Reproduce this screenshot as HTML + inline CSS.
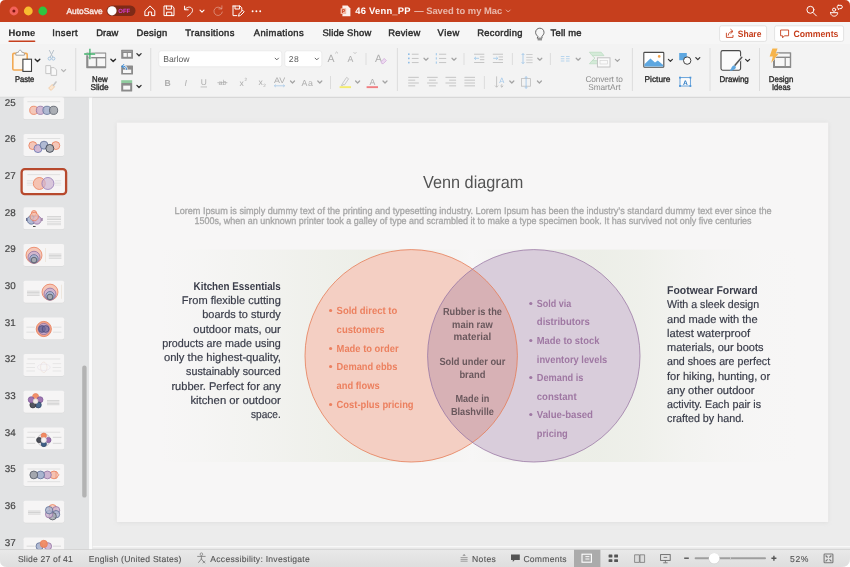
<!DOCTYPE html>
<html lang="en">
<head>
<meta charset="utf-8">
<title>46 Venn_PP — Saved to my Mac</title>
<style>
html,body{margin:0;padding:0;background:#fff;overflow:hidden}
body{width:850px;height:567px;font-family:'Liberation Sans', sans-serif}
svg{display:block;position:absolute;left:0;top:0;will-change:transform}
text{-webkit-font-smoothing:antialiased;text-rendering:geometricPrecision;font-family:'Liberation Sans', sans-serif;white-space:pre}
</style>
</head>
<body>
<svg width="850" height="567" viewBox="0 0 850 567">
<defs>
<clipPath id="win"><path d="M0 5.5Q0 0 5.5 0H844.5Q850 0 850 5.5V558Q850 567 841 567H7Q0 567 0 560Z"/></clipPath>
<clipPath id="cl"><circle cx="411.2" cy="355.8" r="106.2"/></clipPath>
<linearGradient id="band" x1="0" x2="1" y1="0" y2="0">
<stop offset="0.0000" stop-color="#eceee7" stop-opacity="0"/>
<stop offset="0.0625" stop-color="#eceee7" stop-opacity="0.12"/>
<stop offset="0.1562" stop-color="#eceee7" stop-opacity="0.4"/>
<stop offset="0.2188" stop-color="#eceee7" stop-opacity="0.62"/>
<stop offset="0.3125" stop-color="#eceee7" stop-opacity="0.9"/>
<stop offset="0.3750" stop-color="#eceee7" stop-opacity="1.0"/>
<stop offset="0.4375" stop-color="#eceee7" stop-opacity="0.3"/>
<stop offset="0.4875" stop-color="#eceee7" stop-opacity="0.0"/>
<stop offset="0.5391" stop-color="#eceee7" stop-opacity="0.3"/>
<stop offset="0.6016" stop-color="#eceee7" stop-opacity="1.0"/>
<stop offset="0.6875" stop-color="#eceee7" stop-opacity="0.95"/>
<stop offset="0.7500" stop-color="#eceee7" stop-opacity="0.75"/>
<stop offset="0.8125" stop-color="#eceee7" stop-opacity="0.42"/>
<stop offset="0.8750" stop-color="#eceee7" stop-opacity="0.18"/>
<stop offset="0.9375" stop-color="#eceee7" stop-opacity="0.05"/>
<stop offset="1.0000" stop-color="#eceee7" stop-opacity="0"/>
</linearGradient>
<linearGradient id="stat" x1="0" x2="0" y1="0" y2="1">
<stop offset="0" stop-color="#e9e9e9"/><stop offset="1" stop-color="#dedede"/>
</linearGradient>
<filter id="sh" x="-5%" y="-5%" width="110%" height="110%"><feGaussianBlur stdDeviation="2"/></filter>
<filter id="sh1" x="-20%" y="-20%" width="140%" height="140%"><feGaussianBlur stdDeviation="0.7"/></filter>
</defs>
<g clip-path="url(#win)">
<rect x="0" y="0" width="850" height="567" fill="#ececec"/>
<g id="titlebar">
<rect x="0" y="0" width="850" height="22" fill="#c63f1d"/>
<circle cx="13.9" cy="11" r="4.4" fill="#f2625a"/><circle cx="13.9" cy="11" r="1.5" fill="#7a1410"/>
<circle cx="28.3" cy="11" r="4.4" fill="#f8bd30"/>
<circle cx="42.8" cy="11" r="4.4" fill="#2fc540"/>
<text x="66.40" y="13.60" style="stroke:#fff;stroke-width:0.4px;letter-spacing:0.010px" font-size="8.4" fill="#fff" opacity="0.88">AutoSave</text>
<rect x="106.5" y="5.6" width="29" height="10.4" rx="5.2" fill="#7d2a17"/>
<circle cx="112" cy="10.8" r="4.6" fill="#fdfdfd"/>
<text transform="translate(118.30 13.20) scale(0.9616 1)" font-size="6.2" fill="#d63fd2" font-weight="700">OFF</text>
<path d="M145.2 10.6L150 5.9L154.8 10.6V15.6H151.6V12H148.4V15.6H145.2Z" fill="none" stroke="#fff" stroke-width="1.0" stroke-linejoin="round" stroke-linecap="round"/>
<path d="M164.4 6H172.2L174 7.8V15.6H164.4Z M166.4 6V9.2H171.4V6 M166.6 15.6V12.2H171.8V15.6" fill="none" stroke="#fff" stroke-width="1.0" stroke-linejoin="round" stroke-linecap="round"/>
<path d="M184.6 6.2V9.8H188.2 M184.8 9.6C186.6 6.8 190.4 6.2 192 8.6C193.6 11 191.6 13.6 187.6 16.2" fill="none" stroke="#fff" stroke-width="1.0" stroke-linejoin="round" stroke-linecap="round"/>
<path d="M200.00 10.20L202.00 12.20L204.00 10.20" fill="none" stroke="#fff" stroke-width="1.1" stroke-linecap="round" stroke-linejoin="round"/>
<path d="M221.4 8.6A4.2 4.2 0 1 0 222.3 12 M221.9 5.8V8.9H218.8" fill="none" stroke="#fff" stroke-width="1.0" stroke-linejoin="round" stroke-linecap="round" opacity="0.36"/>
<path d="M233 6H240L241.8 7.8V10.4 M233 6V15.6H236.8 M235 6V9H239.6V6" fill="none" stroke="#fff" stroke-width="1.0" stroke-linejoin="round" stroke-linecap="round"/>
<path d="M238.6 15.8L239.2 13.6L242.6 10.2L244.2 11.8L240.8 15.2Z" fill="none" stroke="#fff" stroke-width="1.0" stroke-linejoin="round" stroke-linecap="round" stroke-width="0.9"/>
<circle cx="252.6" cy="11.2" r="0.95" fill="#fff"/>
<circle cx="256.4" cy="11.2" r="0.95" fill="#fff"/>
<circle cx="260.2" cy="11.2" r="0.95" fill="#fff"/>
<path d="M342.4 5.6H347.6L350.4 8.4V16.2H342.4Z" fill="#fff" opacity="0.92"/>
<rect x="340.6" y="8.2" width="5.6" height="5.8" rx="0.6" fill="#f3b9a6"/>
<text x="341.70" y="13.10" font-size="5.4" fill="#c63f1d" font-weight="700">P</text>
<text x="355.20" y="14.30" style="letter-spacing:0.249px" font-size="9.4" fill="#fff" font-weight="700">46 Venn_PP</text>
<text x="414.20" y="14.30" style="letter-spacing:-0.004px" font-size="9.4" fill="#fff" font-weight="700" opacity="0.62">— Saved to my Mac</text>
<path d="M506.20 10.00L508.20 12.00L510.20 10.00" fill="none" stroke="#fff" stroke-width="0.9" stroke-linecap="round" stroke-linejoin="round" opacity="0.6"/>
<circle cx="810.4" cy="9.8" r="3.5" fill="none" stroke="#fff" stroke-width="1.0" stroke-linejoin="round" stroke-linecap="round" stroke-width="0.95"/><path d="M813 12.5L816.4 15.9" fill="none" stroke="#fff" stroke-width="1.0" stroke-linejoin="round" stroke-linecap="round" stroke-width="0.95"/>
<circle cx="834.1" cy="9.7" r="1.6" fill="none" stroke="#fff" stroke-width="1.0" stroke-linejoin="round" stroke-linecap="round" stroke-width="0.9"/><path d="M830.5 12.7H837.7C837.7 17.4 830.5 17.4 830.5 12.7Z" fill="none" stroke="#fff" stroke-width="1.0" stroke-linejoin="round" stroke-linecap="round" stroke-width="0.9"/>
<path d="M838.2 5.3H841.2C842.6 5.3 842.6 8.6 841.2 8.6H839.6L838.4 9.8V8.6C836.8 8.6 836.8 5.3 838.2 5.3Z" fill="none" stroke="#fff" stroke-width="1.0" stroke-linejoin="round" stroke-linecap="round" stroke-width="0.9"/>
</g>
<g id="tabs">
<rect x="0" y="22" width="850" height="22" fill="#f6f6f6"/>
<text x="8.60" y="36.00" style="stroke:#2b2b2b;stroke-width:0.15px;letter-spacing:0.184px" font-size="9.4" fill="#2b2b2b" font-weight="700">Home</text>
<text x="52.30" y="36.00" style="stroke:#2b2b2b;stroke-width:0.42px;letter-spacing:0.369px" font-size="9.4" fill="#2b2b2b">Insert</text>
<text x="96.30" y="36.00" style="stroke:#2b2b2b;stroke-width:0.42px;letter-spacing:0.003px" font-size="9.4" fill="#2b2b2b">Draw</text>
<text x="136.40" y="36.00" style="stroke:#2b2b2b;stroke-width:0.42px;letter-spacing:0.322px" font-size="9.4" fill="#2b2b2b">Design</text>
<text x="185.20" y="36.00" style="stroke:#2b2b2b;stroke-width:0.42px;letter-spacing:0.368px" font-size="9.4" fill="#2b2b2b">Transitions</text>
<text x="253.80" y="36.00" style="stroke:#2b2b2b;stroke-width:0.42px;letter-spacing:0.379px" font-size="9.4" fill="#2b2b2b">Animations</text>
<text x="322.40" y="36.00" style="stroke:#2b2b2b;stroke-width:0.42px;letter-spacing:0.210px" font-size="9.4" fill="#2b2b2b">Slide Show</text>
<text x="388.20" y="36.00" style="stroke:#2b2b2b;stroke-width:0.42px;letter-spacing:0.250px" font-size="9.4" fill="#2b2b2b">Review</text>
<text x="437.60" y="36.00" style="stroke:#2b2b2b;stroke-width:0.42px;letter-spacing:0.481px" font-size="9.4" fill="#2b2b2b">View</text>
<text x="477.30" y="36.00" style="stroke:#2b2b2b;stroke-width:0.42px;letter-spacing:0.296px" font-size="9.4" fill="#2b2b2b">Recording</text>
<text x="550.60" y="36.00" style="stroke:#2b2b2b;stroke-width:0.42px;letter-spacing:0.216px" font-size="9.4" fill="#2b2b2b">Tell me</text>
<rect x="8.4" y="40.4" width="27" height="1.6" rx="0.8" fill="#c63f1d"/>
<path d="M537.6 36.2C536 34.6 535.6 33.6 535.6 32.4C535.6 29.9 537.4 28.2 539.8 28.2C542.2 28.2 544 29.9 544 32.4C544 33.6 543.6 34.6 542 36.2V38.2H537.6Z M538 39.8H541.6" fill="none" stroke="#555" stroke-width="0.9" stroke-linejoin="round" stroke-linecap="round"/>
<rect x="719.6" y="25.8" width="47" height="15.6" rx="2" fill="#fff" stroke="#dcdcdc" stroke-width="0.8"/>
<path d="M726.4 33.2V37.4H733V35.4 M728.2 35.2C728.6 32.8 730.2 31.4 732.4 31.4 M730.8 29.4L733 31.4L730.8 33.4" fill="none" stroke="#c63f1d" stroke-width="0.9" stroke-linejoin="round" stroke-linecap="round"/>
<text transform="translate(737.80 37.00) scale(0.9238 1)" font-size="9.2" fill="#c63f1d" font-weight="700">Share</text>
<rect x="774.6" y="25.8" width="69" height="15.6" rx="2" fill="#fff" stroke="#dcdcdc" stroke-width="0.8"/>
<path d="M780.6 30H788.6V35.8H784.4L782.6 37.8V35.8H780.6Z" fill="none" stroke="#c63f1d" stroke-width="0.9" stroke-linejoin="round"/>
<text transform="translate(793.40 37.00) scale(0.9477 1)" font-size="9.2" fill="#c63f1d" font-weight="700">Comments</text>
</g>
<g id="ribbon">
<rect x="0" y="44" width="850" height="53" fill="#f3f3f3"/>
<rect x="0" y="96.8" width="850" height="0.9" fill="#cfcfcf"/>
<rect x="12.8" y="53.4" width="14.4" height="16.6" rx="1.2" fill="#fcf6ee" stroke="#f2a953" stroke-width="1.6"/>
<path d="M15.8 55.2V53.6C15.8 52.4 17.6 52.6 18.4 52.2C18.6 49.6 21.6 49.6 21.8 52.2C22.6 52.6 24.4 52.4 24.4 53.6V55.2Z" fill="#fdfdfd" stroke="#9a9a9a" stroke-width="0.9" stroke-linejoin="round"/>
<rect x="22.9" y="59.2" width="8.6" height="12.2" fill="#fff" stroke="#3e3e3e" stroke-width="1.1"/>
<path d="M35.20 59.25L37.50 61.55L39.80 59.25" fill="none" stroke="#2e2e2e" stroke-width="1.4" stroke-linecap="round" stroke-linejoin="round"/>
<text transform="translate(14.90 82.00) scale(0.9143 1)" style="stroke:#2e2e2e;stroke-width:0.36px" font-size="8.3" fill="#2e2e2e">Paste</text>
<path d="M49.4 50.4L52.8 57.2 M53.6 50.4L50.2 57.2" fill="none" stroke="#b9c3cc" stroke-width="1" stroke-linecap="round"/>
<circle cx="49.6" cy="58.6" r="1.5" fill="none" stroke="#9fc0dd" stroke-width="0.9"/><circle cx="53.4" cy="58.6" r="1.5" fill="none" stroke="#9fc0dd" stroke-width="0.9"/>
<path d="M45.8 65.6H50.6V73.6H45.8Z M51 67.6H54.2L56.6 70V75.4H51Z" fill="#f8f8f8" stroke="#c2c2c2" stroke-width="0.9" stroke-linejoin="round"/>
<path d="M61.60 69.60L63.60 71.60L65.60 69.60" fill="none" stroke="#b4b4b4" stroke-width="1.25" stroke-linecap="round" stroke-linejoin="round"/>
<path d="M48.6 88.2L52.2 84.4L54.6 86.8L51.2 90.4Z" fill="#fbe6cf" stroke="#f1c8a0" stroke-width="0.8" stroke-linejoin="round"/><path d="M53.4 85.4L56 82" stroke="#c6c6c6" stroke-width="1.6" stroke-linecap="round"/>
<rect x="75.40" y="48" width="0.8" height="43" fill="#d6d6d6"/>
<rect x="86.2" y="52.4" width="20" height="15.8" rx="0.6" fill="#8b8b8b"/>
<rect x="88.4" y="53.6" width="16.8" height="3.4" fill="#f7f7f7"/><rect x="88.4" y="58.4" width="7.4" height="7.8" fill="#f7f7f7"/><rect x="97.2" y="58.4" width="8" height="7.8" fill="#f7f7f7"/>
<path d="M89.9 48.8V59.2 M84.2 54H95.2" stroke="#f3f3f3" stroke-width="2.6" fill="none" opacity="0.9"/>
<path d="M89.9 48.8V59.2 M84.2 54H95.2" stroke="#3fae6a" stroke-width="1.3" fill="none"/>
<path d="M110.90 59.25L113.20 61.55L115.50 59.25" fill="none" stroke="#2e2e2e" stroke-width="1.4" stroke-linecap="round" stroke-linejoin="round"/>
<text transform="translate(92.00 82.00) scale(0.9392 1)" style="stroke:#2e2e2e;stroke-width:0.36px" font-size="8.3" fill="#2e2e2e">New</text>
<text x="90.60" y="90.40" style="stroke:#2e2e2e;stroke-width:0.36px;letter-spacing:-0.113px" font-size="8.3" fill="#2e2e2e">Slide</text>
<rect x="121.2" y="49.8" width="11.8" height="9" rx="0.5" fill="#8b8b8b"/><rect x="123.4" y="53" width="3.4" height="3.8" fill="#f7f7f7"/><rect x="127.8" y="53" width="3.4" height="3.8" fill="#f7f7f7"/><rect x="122.6" y="50.8" width="9" height="1" fill="#a9a9a9"/>
<path d="M136.90 53.65L139.00 55.75L141.10 53.65" fill="none" stroke="#333" stroke-width="1.3" stroke-linecap="round" stroke-linejoin="round"/>
<rect x="121.2" y="65.6" width="11.8" height="9" rx="0.5" fill="#8b8b8b"/><rect x="123" y="69.6" width="8.2" height="3.4" fill="#f7f7f7"/>
<path d="M126.6 69.4C126.6 66.8 124.6 65.8 122.4 66.4" stroke="#f3f3f3" stroke-width="2.4" fill="none"/><path d="M126.6 69.4C126.6 66.8 124.6 65.8 122.2 66.4 M123.8 64.4L121.8 66.5L124 68.2" stroke="#3a8ad6" stroke-width="1" fill="none" stroke-linecap="round" stroke-linejoin="round"/>
<rect x="121.2" y="80.2" width="11" height="2.8" fill="#8fcb9e"/><rect x="121.2" y="83" width="11" height="8.6" rx="0.5" fill="#8b8b8b"/><rect x="123.2" y="85.6" width="7" height="4" fill="#f7f7f7"/>
<path d="M136.90 85.35L139.00 87.45L141.10 85.35" fill="none" stroke="#333" stroke-width="1.3" stroke-linecap="round" stroke-linejoin="round"/>
<rect x="150.40" y="48" width="0.8" height="43" fill="#d6d6d6"/>
<rect x="158.8" y="50.8" width="123" height="16" rx="2.4" fill="#fff" stroke="#e2e2e2" stroke-width="0.6"/>
<text x="163.20" y="62.00" style="letter-spacing:-0.016px" font-size="8.6" fill="#5e5e5e">Barlow</text>
<path d="M275.10 58.15L276.80 59.85L278.50 58.15" fill="none" stroke="#666" stroke-width="1.0" stroke-linecap="round" stroke-linejoin="round"/>
<rect x="284.8" y="50.8" width="37" height="16" rx="2.4" fill="#fff" stroke="#e2e2e2" stroke-width="0.6"/>
<text x="288.80" y="62.00" style="letter-spacing:0.438px" font-size="8.6" fill="#5e5e5e">28</text>
<path d="M315.10 58.15L316.80 59.85L318.50 58.15" fill="none" stroke="#666" stroke-width="1.0" stroke-linecap="round" stroke-linejoin="round"/>
<text x="327.60" y="62.20" font-size="10.5" fill="#adadad">A</text>
<path d="M335.2 53.4L336.6 52L338 53.4" fill="none" stroke="#adadad" stroke-width="0.7"/>
<text x="347.40" y="62.20" font-size="8.8" fill="#adadad">A</text>
<path d="M353.6 52.2L355 53.6L356.4 52.2" fill="none" stroke="#adadad" stroke-width="0.7"/>
<rect x="365.60" y="53" width="0.8" height="12" fill="#d6d6d6"/>
<text x="375.00" y="62.20" font-size="10.5" fill="#adadad">A</text>
<path d="M381 61.8L384.2 58.4L386.4 60.6L383.4 63.6H381.8Z" fill="#ecd8f0" stroke="#cfa6d8" stroke-width="0.7" stroke-linejoin="round"/>
<rect x="396.90" y="48" width="0.8" height="43" fill="#d6d6d6"/>
<text x="164.60" y="85.60" font-size="8.6" fill="#adadad" font-weight="700">B</text>
<text x="184.40" y="85.60" style="font-style:italic" font-size="8.6" fill="#adadad">I</text>
<text x="200.80" y="85.20" font-size="8.4" fill="#adadad">U</text>
<rect x="200.6" y="86.6" width="6.4" height="0.7" fill="#adadad"/>
<text x="218.60" y="85.20" font-size="7.2" fill="#adadad">ab</text>
<rect x="217.4" y="82.4" width="10" height="0.7" fill="#adadad"/>
<text x="239.60" y="85.60" font-size="8.6" fill="#adadad">x</text>
<text x="244.40" y="81.40" font-size="4.6" fill="#adadad">2</text>
<text x="258.40" y="85.00" font-size="8.6" fill="#adadad">x</text>
<text x="263.20" y="87.40" font-size="4.6" fill="#adadad">2</text>
<text transform="translate(274.00 83.20) scale(1.1113 1)" font-size="8.0" fill="#adadad">AV</text>
<path d="M274.4 85.8H284.6 M275.8 84.6L274.4 85.8L275.8 87 M283.2 84.6L284.6 85.8L283.2 87" fill="none" stroke="#9cc3e6" stroke-width="0.7"/>
<path d="M290.50 81.00L292.50 83.00L294.50 81.00" fill="none" stroke="#a4a4a4" stroke-width="1.25" stroke-linecap="round" stroke-linejoin="round"/>
<text x="301.60" y="85.60" style="letter-spacing:0.634px" font-size="8.8" fill="#adadad">Aa</text>
<path d="M317.80 81.00L319.80 83.00L321.80 81.00" fill="none" stroke="#a4a4a4" stroke-width="1.25" stroke-linecap="round" stroke-linejoin="round"/>
<rect x="330.10" y="76" width="0.8" height="13" fill="#d6d6d6"/>
<path d="M342.4 83.6L346.6 77.4L348.6 78.8L344.4 85Z M342.2 84L341.4 85.6L343.4 85.2" fill="none" stroke="#bdbdbd" stroke-width="0.8" stroke-linejoin="round"/>
<rect x="339.6" y="86.2" width="11.4" height="1.9" fill="#f4ec6e"/>
<path d="M355.60 81.00L357.60 83.00L359.60 81.00" fill="none" stroke="#a4a4a4" stroke-width="1.25" stroke-linecap="round" stroke-linejoin="round"/>
<text x="369.40" y="85.00" font-size="8.8" fill="#adadad">A</text>
<rect x="366.6" y="86.2" width="11.4" height="1.9" fill="#f07e82"/>
<path d="M383.00 81.00L385.00 83.00L387.00 81.00" fill="none" stroke="#a4a4a4" stroke-width="1.25" stroke-linecap="round" stroke-linejoin="round"/>
<rect x="408.0" y="53.40" width="1.6" height="1.6" fill="#8fbde6"/><rect x="411.8" y="53.75" width="6.8" height="0.9" fill="#c0c0c0"/>
<rect x="408.0" y="57.60" width="1.6" height="1.6" fill="#8fbde6"/><rect x="411.8" y="57.95" width="6.8" height="0.9" fill="#c0c0c0"/>
<rect x="408.0" y="61.80" width="1.6" height="1.6" fill="#8fbde6"/><rect x="411.8" y="62.15" width="6.8" height="0.9" fill="#c0c0c0"/>
<path d="M424.00 58.20L426.00 60.20L428.00 58.20" fill="none" stroke="#a4a4a4" stroke-width="1.25" stroke-linecap="round" stroke-linejoin="round"/>
<rect x="435.8" y="53.10" width="1.0" height="2.2" fill="#9cc6ea"/><rect x="439.0" y="53.75" width="7.2" height="0.9" fill="#c0c0c0"/>
<rect x="435.8" y="57.30" width="1.0" height="2.2" fill="#9cc6ea"/><rect x="439.0" y="57.95" width="7.2" height="0.9" fill="#c0c0c0"/>
<rect x="435.8" y="61.50" width="1.0" height="2.2" fill="#9cc6ea"/><rect x="439.0" y="62.15" width="7.2" height="0.9" fill="#c0c0c0"/>
<path d="M452.00 58.20L454.00 60.20L456.00 58.20" fill="none" stroke="#a4a4a4" stroke-width="1.25" stroke-linecap="round" stroke-linejoin="round"/>
<rect x="463.60" y="53" width="0.8" height="12" fill="#d6d6d6"/>
<rect x="474.10" y="53.75" width="10.2" height="0.9" fill="#c0c0c0"/>
<rect x="479.90" y="56.50" width="4.4" height="0.9" fill="#c0c0c0"/>
<rect x="479.90" y="59.25" width="4.4" height="0.9" fill="#c0c0c0"/>
<rect x="474.10" y="62.00" width="10.2" height="0.9" fill="#c0c0c0"/>
<path d="M479 58.3H474.4 M476 56.8L474.4 58.3L476 59.8" fill="none" stroke="#9cc6ea" stroke-width="0.8"/>
<rect x="492.80" y="53.75" width="10.2" height="0.9" fill="#c0c0c0"/>
<rect x="498.60" y="56.50" width="4.4" height="0.9" fill="#c0c0c0"/>
<rect x="498.60" y="59.25" width="4.4" height="0.9" fill="#c0c0c0"/>
<rect x="492.80" y="62.00" width="10.2" height="0.9" fill="#c0c0c0"/>
<path d="M493.2 58.3H497.8 M496.2 56.8L497.8 58.3L496.2 59.8" fill="none" stroke="#9cc6ea" stroke-width="0.8"/>
<rect x="511.90" y="53" width="0.8" height="12" fill="#d6d6d6"/>
<path d="M523 53.6V63.6 M521.6 55L523 53.6L524.4 55 M521.6 62.2L523 63.6L524.4 62.2" fill="none" stroke="#8fbde6" stroke-width="0.7"/>
<rect x="526.20" y="54.20" width="6.4" height="0.8" fill="#c4c4c4"/>
<rect x="526.20" y="56.90" width="6.4" height="0.8" fill="#c4c4c4"/>
<rect x="526.20" y="59.60" width="6.4" height="0.8" fill="#c4c4c4"/>
<rect x="526.20" y="62.30" width="6.4" height="0.8" fill="#c4c4c4"/>
<path d="M537.80 58.20L539.80 60.20L541.80 58.20" fill="none" stroke="#a4a4a4" stroke-width="1.25" stroke-linecap="round" stroke-linejoin="round"/>
<rect x="549.90" y="53" width="0.8" height="12" fill="#d6d6d6"/>
<rect x="560.8" y="56.20" width="3.6" height="0.8" fill="#a9cdec"/><rect x="566" y="56.20" width="3.6" height="0.8" fill="#a9cdec"/>
<rect x="560.8" y="58.40" width="3.6" height="0.8" fill="#a9cdec"/><rect x="566" y="58.40" width="3.6" height="0.8" fill="#a9cdec"/>
<rect x="560.8" y="60.60" width="3.6" height="0.8" fill="#a9cdec"/><rect x="566" y="60.60" width="3.6" height="0.8" fill="#a9cdec"/>
<path d="M576.20 58.20L578.20 60.20L580.20 58.20" fill="none" stroke="#a4a4a4" stroke-width="1.25" stroke-linecap="round" stroke-linejoin="round"/>
<path d="M589.4 52.2H601.2L604 55.6H592.2Z M589.4 63.8H599.6L602.4 60.6H592.2Z" fill="#d4ead8" stroke="#b4d9bb" stroke-width="0.6"/><path d="M592.2 55.6L595 58.2L592.2 60.6" fill="none" stroke="#b4d9bb" stroke-width="0.8"/>
<rect x="597.4" y="57.8" width="12.6" height="9.2" fill="#fafafa" stroke="#bdbdbd" stroke-width="0.9"/><rect x="600" y="60.6" width="7.4" height="3.4" fill="none" stroke="#cfcfcf" stroke-width="0.6"/>
<path d="M615.40 59.40L617.40 61.40L619.40 59.40" fill="none" stroke="#a4a4a4" stroke-width="1.25" stroke-linecap="round" stroke-linejoin="round"/>
<text x="585.40" y="82.00" style="letter-spacing:-0.098px" font-size="8.3" fill="#8c8c8c">Convert to</text>
<text x="588.20" y="90.40" style="letter-spacing:-0.048px" font-size="8.3" fill="#8c8c8c">SmartArt</text>
<rect x="408.20" y="76.85" width="10.6" height="0.9" fill="#c0c0c0"/>
<rect x="408.20" y="79.70" width="7" height="0.9" fill="#c0c0c0"/>
<rect x="408.20" y="82.55" width="10.6" height="0.9" fill="#c0c0c0"/>
<rect x="408.20" y="85.40" width="7" height="0.9" fill="#c0c0c0"/>
<rect x="427.10" y="76.85" width="10.6" height="0.9" fill="#c0c0c0"/>
<rect x="428.90" y="79.70" width="7" height="0.9" fill="#c0c0c0"/>
<rect x="427.10" y="82.55" width="10.6" height="0.9" fill="#c0c0c0"/>
<rect x="428.90" y="85.40" width="7" height="0.9" fill="#c0c0c0"/>
<rect x="445.50" y="76.85" width="10.6" height="0.9" fill="#c0c0c0"/>
<rect x="449.10" y="79.70" width="7" height="0.9" fill="#c0c0c0"/>
<rect x="445.50" y="82.55" width="10.6" height="0.9" fill="#c0c0c0"/>
<rect x="449.10" y="85.40" width="7" height="0.9" fill="#c0c0c0"/>
<rect x="464.40" y="76.85" width="10.6" height="0.9" fill="#c0c0c0"/>
<rect x="464.40" y="79.70" width="10.6" height="0.9" fill="#c0c0c0"/>
<rect x="464.40" y="82.55" width="10.6" height="0.9" fill="#c0c0c0"/>
<rect x="464.40" y="85.40" width="10.6" height="0.9" fill="#c0c0c0"/>
<rect x="483.90" y="76" width="0.8" height="13" fill="#d6d6d6"/>
<path d="M496.6 76.4V87.2 M495 85.6L496.6 87.2L498.2 85.6" fill="none" stroke="#b8b8b8" stroke-width="0.8"/>
<text x="499.30" y="83.20" font-size="7.6" fill="#a4c8ea">A</text>
<path d="M501.8 84.2V87.2 M500.4 85.8L501.8 87.2L503.2 85.8" stroke="#b8b8b8" stroke-width="0.8" fill="none"/>
<path d="M509.80 81.00L511.80 83.00L513.80 81.00" fill="none" stroke="#a4a4a4" stroke-width="1.25" stroke-linecap="round" stroke-linejoin="round"/>
<rect x="521.6" y="78.6" width="9" height="7.6" fill="none" stroke="#bdbdbd" stroke-width="0.8"/><path d="M526.1 76.6V88.4 M524.9 77.8L526.1 76.6L527.3 77.8 M524.9 87.2L526.1 88.4L527.3 87.2" fill="none" stroke="#8fbde6" stroke-width="0.7"/>
<path d="M537.40 81.00L539.40 83.00L541.40 81.00" fill="none" stroke="#a4a4a4" stroke-width="1.25" stroke-linecap="round" stroke-linejoin="round"/>
<rect x="631.90" y="48" width="0.8" height="43" fill="#d6d6d6"/>
<rect x="643.8" y="52.4" width="20" height="14.8" rx="0.8" fill="#fff" stroke="#4a4a4a" stroke-width="1.1"/>
<path d="M644.4 64.2L650.4 58.4L655 62.6L657.8 60.4L663.2 65V66.6H644.4Z" fill="#5ea7e0"/><circle cx="659.2" cy="56.4" r="1.3" fill="#f2a24a"/>
<path d="M668.40 59.40L670.40 61.40L672.40 59.40" fill="none" stroke="#333" stroke-width="1.2" stroke-linecap="round" stroke-linejoin="round"/>
<text x="644.60" y="82.00" style="stroke:#2e2e2e;stroke-width:0.36px;letter-spacing:-0.005px" font-size="8.3" fill="#2e2e2e">Picture</text>
<rect x="679.2" y="53" width="7.6" height="7.2" fill="#5ea7e0"/><circle cx="687.2" cy="60.6" r="3.7" fill="#fbfbfb" stroke="#444" stroke-width="1"/>
<path d="M695.80 57.60L697.80 59.60L699.80 57.60" fill="none" stroke="#333" stroke-width="1.2" stroke-linecap="round" stroke-linejoin="round"/>
<rect x="680" y="77.6" width="10.4" height="8.4" fill="#fbfbfb" stroke="#5b9bd8" stroke-width="0.9"/>
<text x="682.90" y="84.60" font-size="6.6" fill="#2f7cc4" font-weight="700">A</text>
<rect x="679.1" y="76.69999999999999" width="1.8" height="1.8" fill="#4b94d8"/>
<rect x="689.5" y="76.69999999999999" width="1.8" height="1.8" fill="#4b94d8"/>
<rect x="679.1" y="85.1" width="1.8" height="1.8" fill="#4b94d8"/>
<rect x="689.5" y="85.1" width="1.8" height="1.8" fill="#4b94d8"/>
<rect x="709.60" y="48" width="0.8" height="43" fill="#d6d6d6"/>
<rect x="721" y="50.6" width="19.6" height="19.6" rx="1.6" fill="#fbfbfb" stroke="#4a4a4a" stroke-width="1.1"/>
<path d="M741.8 57.2L735 65.2" stroke="#f3f3f3" stroke-width="3.2" stroke-linecap="round"/><path d="M741.8 57.2L735 65.2" stroke="#555" stroke-width="1.5" stroke-linecap="round"/><path d="M729.6 70.6C731 70.2 731.2 67 733.4 65.6C734.8 64.8 736.6 66.6 735.6 68.2C734.4 70.2 731.6 71 729.6 70.6Z" fill="#5ea7e0"/>
<path d="M745.60 59.40L747.60 61.40L749.60 59.40" fill="none" stroke="#333" stroke-width="1.2" stroke-linecap="round" stroke-linejoin="round"/>
<text transform="translate(719.60 82.00) scale(0.9593 1)" style="stroke:#2e2e2e;stroke-width:0.36px" font-size="8.3" fill="#2e2e2e">Drawing</text>
<rect x="759.10" y="48" width="0.8" height="43" fill="#d6d6d6"/>
<rect x="773" y="52.2" width="18.2" height="15.8" rx="0.6" fill="#8b8b8b"/>
<rect x="775" y="53.6" width="14.8" height="3" fill="#f7f7f7"/><rect x="775" y="58" width="9.6" height="8" fill="#f7f7f7"/><rect x="785.8" y="58" width="4" height="8" fill="#f7f7f7"/>
<path d="M772.4 48.4H777.6L775.6 53.4H778.8L771.2 63L772.8 56.4H769.6Z" fill="#f6b44c" stroke="#f3f3f3" stroke-width="0.9" paint-order="stroke"/>
<text transform="translate(768.80 82.00) scale(0.9525 1)" style="stroke:#2e2e2e;stroke-width:0.36px" font-size="8.3" fill="#2e2e2e">Design</text>
<text transform="translate(772.00 90.40) scale(0.9065 1)" style="stroke:#2e2e2e;stroke-width:0.36px" font-size="8.3" fill="#2e2e2e">Ideas</text>
</g>
<g id="thumbs">
<rect x="0" y="97.6" width="89.4" height="452.4" fill="#e2e3e4"/>
<rect x="89.1" y="97.6" width="3.1" height="452.4" fill="#fbfbfb"/><rect x="92.2" y="97.6" width="0.6" height="452.4" fill="#e4e4e4"/>
<rect x="82.2" y="365.6" width="4.4" height="132" rx="2.2" fill="#b3b3b3"/>
<rect x="23.40" y="97.82" width="40.8" height="22" rx="2" fill="#c9c9c9" opacity="0.55" filter="url(#sh1)"/>
<rect x="23.40" y="97.32" width="40.8" height="22" rx="1.8" fill="#f6f5f5"/>
<text x="4.70" y="105.62" style="stroke:#454545;stroke-width:0.2px;letter-spacing:0.094px" font-size="9.8" fill="#454545">25</text>
<rect x="27.40" y="101.52" width="32.8" height="0.6" fill="#d2d2d2"/>
<circle cx="33.80" cy="110.32" r="4.1" fill="#f5c2b1" fill-opacity="0.9" stroke="#e97a54" stroke-width="0.75"/>
<circle cx="40.40" cy="110.32" r="4.1" fill="#cdb4d0" fill-opacity="0.9" stroke="#8f6ea0" stroke-width="0.75"/>
<circle cx="47.00" cy="110.32" r="4.1" fill="#a9b4cf" fill-opacity="0.9" stroke="#5a6a92" stroke-width="0.75"/>
<circle cx="53.60" cy="110.32" r="4.1" fill="#a4a7ae" fill-opacity="0.9" stroke="#4e535e" stroke-width="0.75"/>
<rect x="23.40" y="134.50" width="40.8" height="22" rx="2" fill="#c9c9c9" opacity="0.55" filter="url(#sh1)"/>
<rect x="23.40" y="134.00" width="40.8" height="22" rx="1.8" fill="#f6f5f5"/>
<text x="4.70" y="142.30" style="stroke:#454545;stroke-width:0.2px;letter-spacing:0.094px" font-size="9.8" fill="#454545">26</text>
<rect x="27.40" y="138.20" width="32.8" height="0.6" fill="#d2d2d2"/>
<circle cx="32.80" cy="145.60" r="4.0" fill="#f5c2b1" fill-opacity="0.9" stroke="#e97a54" stroke-width="0.75"/>
<circle cx="55.80" cy="145.60" r="4.0" fill="#f5c2b1" fill-opacity="0.9" stroke="#e97a54" stroke-width="0.75"/>
<circle cx="38.00" cy="148.60" r="4.0" fill="#cdb4d0" fill-opacity="0.9" stroke="#5d6fae" stroke-width="0.75"/>
<circle cx="44.00" cy="145.20" r="4.0" fill="#a9b4cf" fill-opacity="0.9" stroke="#5a6a92" stroke-width="0.75"/>
<circle cx="49.80" cy="148.40" r="4.0" fill="#a4a7ae" fill-opacity="0.9" stroke="#2e3440" stroke-width="0.75"/>
<rect x="21.60" y="169.18" width="44.5" height="25.0" rx="3.2" fill="#f6f4f4" stroke="#b7492d" stroke-width="2.3"/>
<text x="4.70" y="178.98" style="stroke:#454545;stroke-width:0.2px;letter-spacing:0.094px" font-size="9.8" fill="#454545">27</text>
<rect x="27.40" y="174.48" width="32.8" height="0.6" fill="#d2d2d2"/>
<circle cx="39.30" cy="183.48" r="6.0" fill="#f5c2b1" fill-opacity="1" stroke="#e97a54" stroke-width="0.75"/>
<circle cx="47.90" cy="183.48" r="6.0" fill="#cdb4d0" fill-opacity="0.7" stroke="#8f74b4" stroke-width="0.75"/>
<rect x="26.80" y="180.28" width="6.2" height="0.6" fill="#dcdcdc"/>
<rect x="55.00" y="180.28" width="6.2" height="0.6" fill="#dcdcdc"/>
<rect x="26.80" y="181.78" width="6.2" height="0.6" fill="#dcdcdc"/>
<rect x="55.00" y="181.78" width="6.2" height="0.6" fill="#dcdcdc"/>
<rect x="26.80" y="183.28" width="6.2" height="0.6" fill="#dcdcdc"/>
<rect x="55.00" y="183.28" width="6.2" height="0.6" fill="#dcdcdc"/>
<rect x="26.80" y="184.78" width="6.2" height="0.6" fill="#dcdcdc"/>
<rect x="55.00" y="184.78" width="6.2" height="0.6" fill="#dcdcdc"/>
<rect x="23.40" y="207.86" width="40.8" height="22" rx="2" fill="#c9c9c9" opacity="0.55" filter="url(#sh1)"/>
<rect x="23.40" y="207.36" width="40.8" height="22" rx="1.8" fill="#f6f5f5"/>
<text x="4.70" y="215.66" style="stroke:#454545;stroke-width:0.2px;letter-spacing:0.094px" font-size="9.8" fill="#454545">28</text>
<circle cx="34.00" cy="213.16" r="2.6" fill="#f5c2b1" fill-opacity="0.9" stroke="#e97a54" stroke-width="0.75"/>
<circle cx="31.40" cy="219.96" r="4.2" fill="#a9b4cf" fill-opacity="0.9" stroke="#5a6a92" stroke-width="0.75"/>
<circle cx="37.00" cy="219.96" r="4.2" fill="#cdb4d0" fill-opacity="0.9" stroke="#8f6ea0" stroke-width="0.75"/>
<circle cx="34.20" cy="216.56" r="4.2" fill="#f5c2b1" fill-opacity="0.6" stroke="#e97a54" stroke-width="0.75"/>
<rect x="26.00" y="217.96" width="1.2" height="3.0" fill="#6a6f8e"/>
<rect x="41.40" y="217.96" width="1.2" height="3.0" fill="#8a6a96"/>
<rect x="33.00" y="225.96" width="2.6" height="1.0" fill="#444"/>
<rect x="47.00" y="216.16" width="14" height="0.8" fill="#cfcfcf"/>
<rect x="47.00" y="217.66" width="14" height="0.8" fill="#cfcfcf"/>
<rect x="47.00" y="219.16" width="14" height="0.8" fill="#cfcfcf"/>
<rect x="47.00" y="221.36" width="14" height="0.8" fill="#d6d6d6"/>
<rect x="47.00" y="222.86" width="14" height="0.8" fill="#d6d6d6"/>
<rect x="47.00" y="224.36" width="14" height="0.8" fill="#d6d6d6"/>
<rect x="23.40" y="244.54" width="40.8" height="22" rx="2" fill="#c9c9c9" opacity="0.55" filter="url(#sh1)"/>
<rect x="23.40" y="244.04" width="40.8" height="22" rx="1.8" fill="#f6f5f5"/>
<text x="4.70" y="252.34" style="stroke:#454545;stroke-width:0.2px;letter-spacing:0.094px" font-size="9.8" fill="#454545">29</text>
<circle cx="34.00" cy="255.24" r="8.0" fill="#f5c2b1" fill-opacity="0.9" stroke="#e97a54" stroke-width="0.75"/>
<circle cx="34.00" cy="257.24" r="6.0" fill="#cdb4d0" fill-opacity="0.9" stroke="#8f6ea0" stroke-width="0.75"/>
<circle cx="34.00" cy="258.84" r="4.2" fill="#a9b4cf" fill-opacity="0.9" stroke="#5a6a92" stroke-width="0.75"/>
<circle cx="34.00" cy="260.04" r="2.8" fill="#a4a7ae" fill-opacity="0.9" stroke="#4e535e" stroke-width="0.75"/>
<rect x="45.00" y="248.04" width="0.5" height="14" fill="#e6d9c6"/>
<rect x="48.80" y="253.64" width="12.6" height="0.8" fill="#cfcfcf"/>
<rect x="48.80" y="255.04" width="12.6" height="0.8" fill="#cfcfcf"/>
<rect x="48.80" y="256.44" width="12.6" height="0.8" fill="#cfcfcf"/>
<rect x="48.80" y="257.84" width="12.6" height="0.8" fill="#cfcfcf"/>
<rect x="23.40" y="281.22" width="40.8" height="22" rx="2" fill="#c9c9c9" opacity="0.55" filter="url(#sh1)"/>
<rect x="23.40" y="280.72" width="40.8" height="22" rx="1.8" fill="#f6f5f5"/>
<text x="4.70" y="289.02" style="stroke:#454545;stroke-width:0.2px;letter-spacing:0.094px" font-size="9.8" fill="#454545">30</text>
<circle cx="50.00" cy="292.12" r="8.0" fill="#f5c2b1" fill-opacity="0.9" stroke="#e97a54" stroke-width="0.75"/>
<circle cx="50.00" cy="294.12" r="6.0" fill="#cdb4d0" fill-opacity="0.9" stroke="#8f6ea0" stroke-width="0.75"/>
<circle cx="50.00" cy="295.72" r="4.2" fill="#a9b4cf" fill-opacity="0.9" stroke="#5a6a92" stroke-width="0.75"/>
<circle cx="50.00" cy="296.92" r="2.8" fill="#a4a7ae" fill-opacity="0.9" stroke="#4e535e" stroke-width="0.75"/>
<rect x="61.00" y="284.72" width="0.5" height="14" fill="#e6d9c6"/>
<rect x="27.00" y="290.72" width="12.6" height="0.8" fill="#cfcfcf"/>
<rect x="27.00" y="292.12" width="12.6" height="0.8" fill="#cfcfcf"/>
<rect x="27.00" y="293.52" width="12.6" height="0.8" fill="#cfcfcf"/>
<rect x="27.00" y="294.92" width="12.6" height="0.8" fill="#cfcfcf"/>
<rect x="23.40" y="317.90" width="40.8" height="22" rx="2" fill="#c9c9c9" opacity="0.55" filter="url(#sh1)"/>
<rect x="23.40" y="317.40" width="40.8" height="22" rx="1.8" fill="#f6f5f5"/>
<text x="4.70" y="325.70" style="stroke:#454545;stroke-width:0.2px;letter-spacing:0.094px" font-size="9.8" fill="#454545">31</text>
<circle cx="43.80" cy="329.00" r="7.6" fill="#f0a58c" fill-opacity="1" stroke="#e97a54" stroke-width="0.8"/>
<circle cx="43.80" cy="329.00" r="5.6" fill="#c9a9c4" fill-opacity="1" stroke="#8f6ea0" stroke-width="0.75"/>
<circle cx="42.00" cy="329.00" r="3.4" fill="#6f6a9a" fill-opacity="0.9" stroke="#4d4a7a" stroke-width="0.75"/>
<circle cx="45.60" cy="329.00" r="3.4" fill="#6f6a9a" fill-opacity="0.7" stroke="#4d4a7a" stroke-width="0.75"/>
<rect x="26.40" y="326.80" width="8.4" height="0.6" fill="#d2d2d2"/>
<rect x="53.00" y="326.80" width="8.4" height="0.6" fill="#d2d2d2"/>
<rect x="26.40" y="331.80" width="8.4" height="0.6" fill="#d2d2d2"/>
<rect x="53.00" y="331.80" width="8.4" height="0.6" fill="#d2d2d2"/>
<rect x="23.40" y="354.58" width="40.8" height="22" rx="2" fill="#c9c9c9" opacity="0.55" filter="url(#sh1)"/>
<rect x="23.40" y="354.08" width="40.8" height="22" rx="1.8" fill="#f6f5f5"/>
<text x="4.70" y="362.38" style="stroke:#454545;stroke-width:0.2px;letter-spacing:0.094px" font-size="9.8" fill="#454545">32</text>
<rect x="27.40" y="358.68" width="32.8" height="0.6" fill="#d2d2d2"/>
<ellipse cx="43.80" cy="367.28" rx="3.2" ry="5.2" fill="none" stroke="#ead9cf" stroke-width="0.5"/>
<ellipse cx="43.80" cy="367.28" rx="6.4" ry="3.2" fill="none" stroke="#e3dde6" stroke-width="0.5"/>
<rect x="26.40" y="363.48" width="8.6" height="0.6" fill="#dcdcdc"/>
<rect x="52.60" y="363.48" width="8.6" height="0.6" fill="#dcdcdc"/>
<rect x="26.40" y="367.08" width="8.6" height="0.6" fill="#dcdcdc"/>
<rect x="52.60" y="367.08" width="8.6" height="0.6" fill="#dcdcdc"/>
<rect x="26.40" y="370.68" width="8.6" height="0.6" fill="#dcdcdc"/>
<rect x="52.60" y="370.68" width="8.6" height="0.6" fill="#dcdcdc"/>
<rect x="23.40" y="391.26" width="40.8" height="22" rx="2" fill="#c9c9c9" opacity="0.55" filter="url(#sh1)"/>
<rect x="23.40" y="390.76" width="40.8" height="22" rx="1.8" fill="#f6f5f5"/>
<text x="4.70" y="399.06" style="stroke:#454545;stroke-width:0.2px;letter-spacing:0.094px" font-size="9.8" fill="#454545">33</text>
<circle cx="35.60" cy="396.56" r="3.0" fill="#f08a62" fill-opacity="0.95" stroke="#e9825e" stroke-width="0.75"/>
<circle cx="39.97" cy="399.74" r="3.0" fill="#9a6fae" fill-opacity="0.95" stroke="#7d5a96" stroke-width="0.75"/>
<circle cx="38.30" cy="404.88" r="3.0" fill="#3f5f86" fill-opacity="0.95" stroke="#2e4666" stroke-width="0.75"/>
<circle cx="32.90" cy="404.88" r="3.0" fill="#4a4d57" fill-opacity="0.95" stroke="#33363e" stroke-width="0.75"/>
<circle cx="31.23" cy="399.74" r="3.0" fill="#9a6fae" fill-opacity="0.95" stroke="#7d5a96" stroke-width="0.75"/>
<circle cx="35.60" cy="401.16" r="2.4" fill="#f2ece8" fill-opacity="1" stroke="#e0d6d0" stroke-width="0.75"/>
<rect x="47.00" y="400.16" width="12.4" height="0.8" fill="#cfcfcf"/>
<rect x="47.00" y="401.56" width="12.4" height="0.8" fill="#cfcfcf"/>
<rect x="47.00" y="402.96" width="12.4" height="0.8" fill="#cfcfcf"/>
<rect x="47.00" y="404.36" width="12.4" height="0.8" fill="#cfcfcf"/>
<rect x="23.40" y="427.94" width="40.8" height="22" rx="2" fill="#c9c9c9" opacity="0.55" filter="url(#sh1)"/>
<rect x="23.40" y="427.44" width="40.8" height="22" rx="1.8" fill="#f6f5f5"/>
<text x="4.70" y="435.74" style="stroke:#454545;stroke-width:0.2px;letter-spacing:0.094px" font-size="9.8" fill="#454545">34</text>
<rect x="27.40" y="431.84" width="32.8" height="0.6" fill="#d2d2d2"/>
<circle cx="43.80" cy="440.04" r="6.4" fill="#ece6ea" fill-opacity="1" stroke="#bbb" stroke-width="0.75"/>
<circle cx="43.80" cy="435.64" r="2.6" fill="#f08a62" fill-opacity="1" stroke="#e97a54" stroke-width="0.75"/>
<circle cx="48.40" cy="440.04" r="2.6" fill="#9a6fae" fill-opacity="1" stroke="#7d5a96" stroke-width="0.75"/>
<circle cx="43.80" cy="444.04" r="2.6" fill="#3f5f86" fill-opacity="1" stroke="#2e4666" stroke-width="0.75"/>
<circle cx="39.20" cy="440.04" r="2.6" fill="#4a4d57" fill-opacity="1" stroke="#33363e" stroke-width="0.75"/>
<circle cx="43.80" cy="440.04" r="2.6" fill="#f4f0f2" fill-opacity="1" stroke="#ddd" stroke-width="0.75"/>
<rect x="26.60" y="436.84" width="8.6" height="0.9" fill="#d2d2d2"/>
<rect x="52.80" y="436.84" width="8.6" height="0.9" fill="#d2d2d2"/>
<rect x="26.60" y="442.84" width="8.6" height="0.9" fill="#d2d2d2"/>
<rect x="52.80" y="442.84" width="8.6" height="0.9" fill="#d2d2d2"/>
<rect x="23.40" y="464.62" width="40.8" height="22" rx="2" fill="#c9c9c9" opacity="0.55" filter="url(#sh1)"/>
<rect x="23.40" y="464.12" width="40.8" height="22" rx="1.8" fill="#f6f5f5"/>
<text x="4.70" y="472.42" style="stroke:#454545;stroke-width:0.2px;letter-spacing:0.094px" font-size="9.8" fill="#454545">35</text>
<rect x="27.40" y="468.72" width="32.8" height="0.6" fill="#d2d2d2"/>
<rect x="27.40" y="481.52" width="32.8" height="0.6" fill="#d2d2d2"/>
<circle cx="54.00" cy="474.92" r="3.9" fill="#f5c2b1" fill-opacity="1" stroke="#e97a54" stroke-width="0.75"/>
<path d="M56.00 471.52L59.20 474.92L56.00 478.32Z" fill="#f5c2b1" stroke="#e97a54" stroke-width="0.5"/>
<circle cx="47.40" cy="474.92" r="3.9" fill="#cdb4d0" fill-opacity="1" stroke="#8f6ea0" stroke-width="0.75"/>
<circle cx="40.60" cy="474.92" r="3.9" fill="#a9b4cf" fill-opacity="1" stroke="#5a6a92" stroke-width="0.75"/>
<circle cx="33.80" cy="474.92" r="3.9" fill="#a4a7ae" fill-opacity="1" stroke="#4e535e" stroke-width="0.75"/>
<rect x="23.40" y="501.30" width="40.8" height="22" rx="2" fill="#c9c9c9" opacity="0.55" filter="url(#sh1)"/>
<rect x="23.40" y="500.80" width="40.8" height="22" rx="1.8" fill="#f6f5f5"/>
<text x="4.70" y="509.10" style="stroke:#454545;stroke-width:0.2px;letter-spacing:0.094px" font-size="9.8" fill="#454545">36</text>
<rect x="28.00" y="510.60" width="12.6" height="0.9" fill="#cfcfcf"/>
<rect x="28.00" y="512.10" width="12.6" height="0.9" fill="#cfcfcf"/>
<rect x="28.00" y="513.60" width="12.6" height="0.9" fill="#cfcfcf"/>
<circle cx="52.60" cy="508.20" r="3.7" fill="#f5c2b1" fill-opacity="0.8" stroke="#e97a54" stroke-width="0.75"/>
<circle cx="56.06" cy="510.20" r="3.7" fill="#cdb4d0" fill-opacity="0.8" stroke="#8f6ea0" stroke-width="0.75"/>
<circle cx="56.06" cy="514.20" r="3.7" fill="#a9b4cf" fill-opacity="0.8" stroke="#5a6a92" stroke-width="0.75"/>
<circle cx="52.60" cy="516.20" r="3.7" fill="#a4a7ae" fill-opacity="0.8" stroke="#4e535e" stroke-width="0.75"/>
<circle cx="49.14" cy="514.20" r="3.7" fill="#cdb4d0" fill-opacity="0.8" stroke="#8f6ea0" stroke-width="0.75"/>
<circle cx="49.14" cy="510.20" r="3.7" fill="#a9b4cf" fill-opacity="0.8" stroke="#5a6a92" stroke-width="0.75"/>
<rect x="23.40" y="537.98" width="40.8" height="22" rx="2" fill="#c9c9c9" opacity="0.55" filter="url(#sh1)"/>
<rect x="23.40" y="537.48" width="40.8" height="22" rx="1.8" fill="#f6f5f5"/>
<text x="4.70" y="545.78" style="stroke:#454545;stroke-width:0.2px;letter-spacing:0.094px" font-size="9.8" fill="#454545">37</text>
<circle cx="39.60" cy="546.28" r="3.6" fill="#a9b4cf" fill-opacity="0.9" stroke="#5a6a92" stroke-width="0.75"/>
<circle cx="48.00" cy="546.28" r="3.6" fill="#cdb4d0" fill-opacity="0.9" stroke="#8f6ea0" stroke-width="0.75"/>
<circle cx="43.80" cy="543.88" r="3.6" fill="#f08a62" fill-opacity="0.95" stroke="#e97a54" stroke-width="0.75"/>
<rect x="26.60" y="545.68" width="8" height="0.9" fill="#d6d6d6"/>
<rect x="53.00" y="545.68" width="8" height="0.9" fill="#d6d6d6"/>
</g>
<g id="slide">
<rect x="117" y="123.2" width="711" height="399.4" fill="#c4c4c4" opacity="0.4" filter="url(#sh)"/>
<rect x="116.8" y="122.6" width="711.4" height="399.4" fill="#f7f6f6"/>
<rect x="160" y="249.6" width="640" height="212.4" fill="url(#band)"/>
<text transform="translate(423.00 187.60) scale(0.9354 1)" font-size="17.4" fill="#535353">Venn diagram</text>
<text transform="translate(174.60 214.00) scale(0.9401 1)" style="stroke:#a6a6a6;stroke-width:0.3px" font-size="9.7" fill="#a6a6a6">Lorem Ipsum is simply dummy text of the printing and typesetting industry. Lorem Ipsum has been the industry’s standard dummy text ever since the</text>
<text transform="translate(194.40 224.00) scale(0.9272 1)" style="stroke:#a6a6a6;stroke-width:0.3px" font-size="9.7" fill="#a6a6a6">1500s, when an unknown printer took a galley of type and scrambled it to make a type specimen book. It has survived not only five centuries</text>
<circle cx="411.2" cy="355.8" r="106.2" fill="#f4cfc3"/>
<circle cx="533.8" cy="355.8" r="106.2" fill="#d9cddb"/>
<circle cx="533.8" cy="355.8" r="106.2" fill="#d7b1b5" clip-path="url(#cl)"/>
<circle cx="411.2" cy="355.8" r="106.2" fill="none" stroke="#e67b55" stroke-opacity="0.78" stroke-width="1"/>
<circle cx="533.8" cy="355.8" r="106.2" fill="none" stroke="#9470a0" stroke-opacity="0.72" stroke-width="1"/>
<text transform="translate(193.60 289.80) scale(0.8765 1)" font-size="11.2" fill="#3a3d4a" font-weight="700">Kitchen Essentials</text>
<text transform="translate(181.80 304.10) scale(0.9889 1)" style="stroke:#3a3d4a;stroke-width:0.2px" font-size="11.2" fill="#3a3d4a">From flexible cutting</text>
<text transform="translate(202.20 318.40) scale(0.9796 1)" style="stroke:#3a3d4a;stroke-width:0.2px" font-size="11.2" fill="#3a3d4a">boards to sturdy</text>
<text transform="translate(193.30 332.70) scale(0.9979 1)" style="stroke:#3a3d4a;stroke-width:0.2px" font-size="11.2" fill="#3a3d4a">outdoor mats, our</text>
<text transform="translate(162.20 347.00) scale(0.9631 1)" style="stroke:#3a3d4a;stroke-width:0.2px" font-size="11.2" fill="#3a3d4a">products are made using</text>
<text transform="translate(163.90 361.20) scale(1.0016 1)" style="stroke:#3a3d4a;stroke-width:0.2px" font-size="11.2" fill="#3a3d4a">only the highest-quality,</text>
<text transform="translate(186.10 375.40) scale(0.9576 1)" style="stroke:#3a3d4a;stroke-width:0.2px" font-size="11.2" fill="#3a3d4a">sustainably sourced</text>
<text transform="translate(171.40 389.60) scale(0.9882 1)" style="stroke:#3a3d4a;stroke-width:0.2px" font-size="11.2" fill="#3a3d4a">rubber. Perfect for any</text>
<text transform="translate(190.40 403.80) scale(1.0094 1)" style="stroke:#3a3d4a;stroke-width:0.2px" font-size="11.2" fill="#3a3d4a">kitchen or outdoor</text>
<text transform="translate(251.00 418.00) scale(0.9039 1)" style="stroke:#3a3d4a;stroke-width:0.2px" font-size="11.2" fill="#3a3d4a">space.</text>
<text transform="translate(667.00 294.10) scale(0.9354 1)" font-size="11.2" fill="#3a3d4a" font-weight="700">Footwear Forward</text>
<text transform="translate(667.00 308.40) scale(0.9504 1)" style="stroke:#3a3d4a;stroke-width:0.2px" font-size="11.2" fill="#3a3d4a">With a sleek design</text>
<text transform="translate(667.00 322.70) scale(0.9919 1)" style="stroke:#3a3d4a;stroke-width:0.2px" font-size="11.2" fill="#3a3d4a">and made with the</text>
<text transform="translate(667.00 337.00) scale(1.0046 1)" style="stroke:#3a3d4a;stroke-width:0.2px" font-size="11.2" fill="#3a3d4a">latest waterproof</text>
<text transform="translate(667.00 351.20) scale(0.9822 1)" style="stroke:#3a3d4a;stroke-width:0.2px" font-size="11.2" fill="#3a3d4a">materials, our boots</text>
<text transform="translate(667.00 365.40) scale(0.9527 1)" style="stroke:#3a3d4a;stroke-width:0.2px" font-size="11.2" fill="#3a3d4a">and shoes are perfect</text>
<text transform="translate(667.00 379.60) scale(0.9868 1)" style="stroke:#3a3d4a;stroke-width:0.2px" font-size="11.2" fill="#3a3d4a">for hiking, hunting, or</text>
<text transform="translate(667.00 393.80) scale(0.9977 1)" style="stroke:#3a3d4a;stroke-width:0.2px" font-size="11.2" fill="#3a3d4a">any other outdoor</text>
<text transform="translate(667.00 408.00) scale(0.9599 1)" style="stroke:#3a3d4a;stroke-width:0.2px" font-size="11.2" fill="#3a3d4a">activity. Each pair is</text>
<text transform="translate(667.00 422.20) scale(0.9609 1)" style="stroke:#3a3d4a;stroke-width:0.2px" font-size="11.2" fill="#3a3d4a">crafted by hand.</text>
<text transform="translate(336.60 314.00) scale(0.9210 1)" font-size="10.3" fill="#ec805f" font-weight="700">Sold direct to</text>
<circle cx="330.6" cy="310.50" r="1.6" fill="#ec805f"/>
<text transform="translate(336.60 333.00) scale(0.9217 1)" font-size="10.3" fill="#ec805f" font-weight="700">customers</text>
<text transform="translate(336.60 352.00) scale(0.9105 1)" font-size="10.3" fill="#ec805f" font-weight="700">Made to order</text>
<circle cx="330.6" cy="348.50" r="1.6" fill="#ec805f"/>
<text transform="translate(336.60 370.00) scale(0.9003 1)" font-size="10.3" fill="#ec805f" font-weight="700">Demand ebbs</text>
<circle cx="330.6" cy="366.50" r="1.6" fill="#ec805f"/>
<text transform="translate(336.60 389.00) scale(0.9056 1)" font-size="10.3" fill="#ec805f" font-weight="700">and flows</text>
<text transform="translate(336.60 408.00) scale(0.9094 1)" font-size="10.3" fill="#ec805f" font-weight="700">Cost-plus pricing</text>
<circle cx="330.6" cy="404.50" r="1.6" fill="#ec805f"/>
<text transform="translate(536.80 307.00) scale(0.8712 1)" font-size="10.3" fill="#9f78a3" font-weight="700">Sold via</text>
<circle cx="530.8" cy="303.50" r="1.6" fill="#9f78a3"/>
<text transform="translate(536.80 325.00) scale(0.9263 1)" font-size="10.3" fill="#9f78a3" font-weight="700">distributors</text>
<text transform="translate(536.80 344.00) scale(0.9116 1)" font-size="10.3" fill="#9f78a3" font-weight="700">Made to stock</text>
<circle cx="530.8" cy="340.50" r="1.6" fill="#9f78a3"/>
<text transform="translate(536.80 363.00) scale(0.9044 1)" font-size="10.3" fill="#9f78a3" font-weight="700">inventory levels</text>
<text transform="translate(536.80 381.00) scale(0.8948 1)" font-size="10.3" fill="#9f78a3" font-weight="700">Demand is</text>
<circle cx="530.8" cy="377.50" r="1.6" fill="#9f78a3"/>
<text transform="translate(536.80 400.00) scale(0.9273 1)" font-size="10.3" fill="#9f78a3" font-weight="700">constant</text>
<text transform="translate(536.80 418.00) scale(0.9352 1)" font-size="10.3" fill="#9f78a3" font-weight="700">Value-based</text>
<circle cx="530.8" cy="414.50" r="1.6" fill="#9f78a3"/>
<text transform="translate(536.80 437.00) scale(0.9030 1)" font-size="10.3" fill="#9f78a3" font-weight="700">pricing</text>
<text transform="translate(472.40 315.20) scale(0.8967 1)" font-size="10.3" fill="#6a585d" font-weight="700" text-anchor="middle">Rubber is the</text>
<text transform="translate(472.40 327.80) scale(0.9095 1)" font-size="10.3" fill="#6a585d" font-weight="700" text-anchor="middle">main raw</text>
<text transform="translate(472.40 340.30) scale(0.9519 1)" font-size="10.3" fill="#6a585d" font-weight="700" text-anchor="middle">material</text>
<text transform="translate(472.40 365.00) scale(0.9012 1)" font-size="10.3" fill="#6a585d" font-weight="700" text-anchor="middle">Sold under our</text>
<text transform="translate(472.40 377.60) scale(0.9088 1)" font-size="10.3" fill="#6a585d" font-weight="700" text-anchor="middle">brand</text>
<text transform="translate(472.40 401.90) scale(0.8867 1)" font-size="10.3" fill="#6a585d" font-weight="700" text-anchor="middle">Made in</text>
<text transform="translate(472.40 414.60) scale(0.8944 1)" font-size="10.3" fill="#6a585d" font-weight="700" text-anchor="middle">Blashville</text>
</g>
<g id="status">
<rect x="92.8" y="546.2" width="757.2" height="1.3" fill="#fbfbfb"/>
<rect x="92.8" y="547.5" width="757.2" height="2" fill="#e8e8e8"/>
<rect x="0" y="549.6" width="850" height="17.4" fill="url(#stat)"/>
<rect x="0" y="549.3" width="850" height="0.7" fill="#cdcdcd"/>
<text x="17.90" y="561.50" style="stroke:#565656;stroke-width:0.12px;letter-spacing:0.180px" font-size="8.6" fill="#565656">Slide 27 of 41</text>
<text x="88.80" y="561.50" style="stroke:#565656;stroke-width:0.12px;letter-spacing:0.214px" font-size="8.6" fill="#565656">English (United States)</text>
<circle cx="201.4" cy="554.2" r="1.3" fill="none" stroke="#777" stroke-width="0.7"/><path d="M197.6 556.4H205.2 M201.4 556.4V559 M201.4 559L198.6 562.4 M201.4 559L204.2 562.4" fill="none" stroke="#777" stroke-width="0.8" stroke-linecap="round"/>
<path d="M202.6 560.8L205.4 563.2 M205.4 560.8L202.6 563.2" stroke="#777" stroke-width="0.6"/>
<text x="210.30" y="561.50" style="stroke:#565656;stroke-width:0.12px;letter-spacing:0.254px" font-size="8.6" fill="#565656">Accessibility: Investigate</text>
<path d="M460.6 557.6H467.6 M460.6 559.4H467.6 M460.6 561.2H467.6" stroke="#8a8a8a" stroke-width="0.8"/><path d="M462.4 555.8L464.1 554L465.8 555.8Z" fill="#8a8a8a"/>
<text x="472.00" y="561.50" style="stroke:#565656;stroke-width:0.12px;letter-spacing:0.337px" font-size="8.6" fill="#565656">Notes</text>
<path d="M511 554.4H519.8V560H514.6L512.8 562V560H511Z" fill="#555"/>
<text x="523.40" y="561.50" style="stroke:#565656;stroke-width:0.12px;letter-spacing:0.236px" font-size="8.6" fill="#565656">Comments</text>
<rect x="574" y="549.8" width="26.4" height="17.2" fill="#ababab"/>
<rect x="582" y="554.2" width="9.4" height="8" fill="none" stroke="#fff" stroke-width="1.1"/><path d="M585.4 556.6H589.4 M585.4 559H589.4" stroke="#fff" stroke-width="0.9"/>
<rect x="608.6" y="554.6" width="3.8" height="2.8" rx="0.5" fill="#555"/>
<rect x="614.2" y="554.6" width="3.8" height="2.8" rx="0.5" fill="#555"/>
<rect x="608.6" y="559.2" width="3.8" height="2.8" rx="0.5" fill="#555"/>
<rect x="614.2" y="559.2" width="3.8" height="2.8" rx="0.5" fill="#555"/>
<path d="M634.6 554.8H639.4V562.4H634.6Z M640 554.8H644.6V562.4H640Z" fill="#dcdcdc" stroke="#777" stroke-width="0.8"/>
<rect x="660.6" y="554.6" width="9.6" height="5.8" fill="none" stroke="#666" stroke-width="0.9"/><path d="M665.4 560.4V562.6 M663.2 562.8H667.6 M663.6 557.4H667.2" stroke="#666" stroke-width="0.8"/>
<rect x="684.2" y="557.5" width="4.6" height="1.4" fill="#555"/>
<rect x="694.6" y="557.2" width="71.4" height="2" rx="1" fill="#9e9e9e"/><rect x="730" y="557" width="1" height="2.4" fill="#c8c8c8"/>
<circle cx="714.2" cy="558.6" r="5.6" fill="#c0c0c0" opacity="0.5"/><circle cx="714.2" cy="558.2" r="5.3" fill="#fff"/>
<path d="M771.4 558.2H776.4 M773.9 555.7V560.7" stroke="#555" stroke-width="1.4"/>
<text x="790.00" y="561.50" style="stroke:#565656;stroke-width:0.12px;letter-spacing:0.598px" font-size="8.6" fill="#565656">52%</text>
<rect x="824.1" y="554" width="8.8" height="8.8" rx="0.8" fill="none" stroke="#777" stroke-width="1.1"/><path d="M825.6 555.5L827.6 557.5 M831.4 555.5L829.4 557.5 M825.6 561.3L827.6 559.3 M831.4 561.3L829.4 559.3" stroke="#777" stroke-width="1.2"/>
</g>
</g>
</svg>
</body>
</html>
